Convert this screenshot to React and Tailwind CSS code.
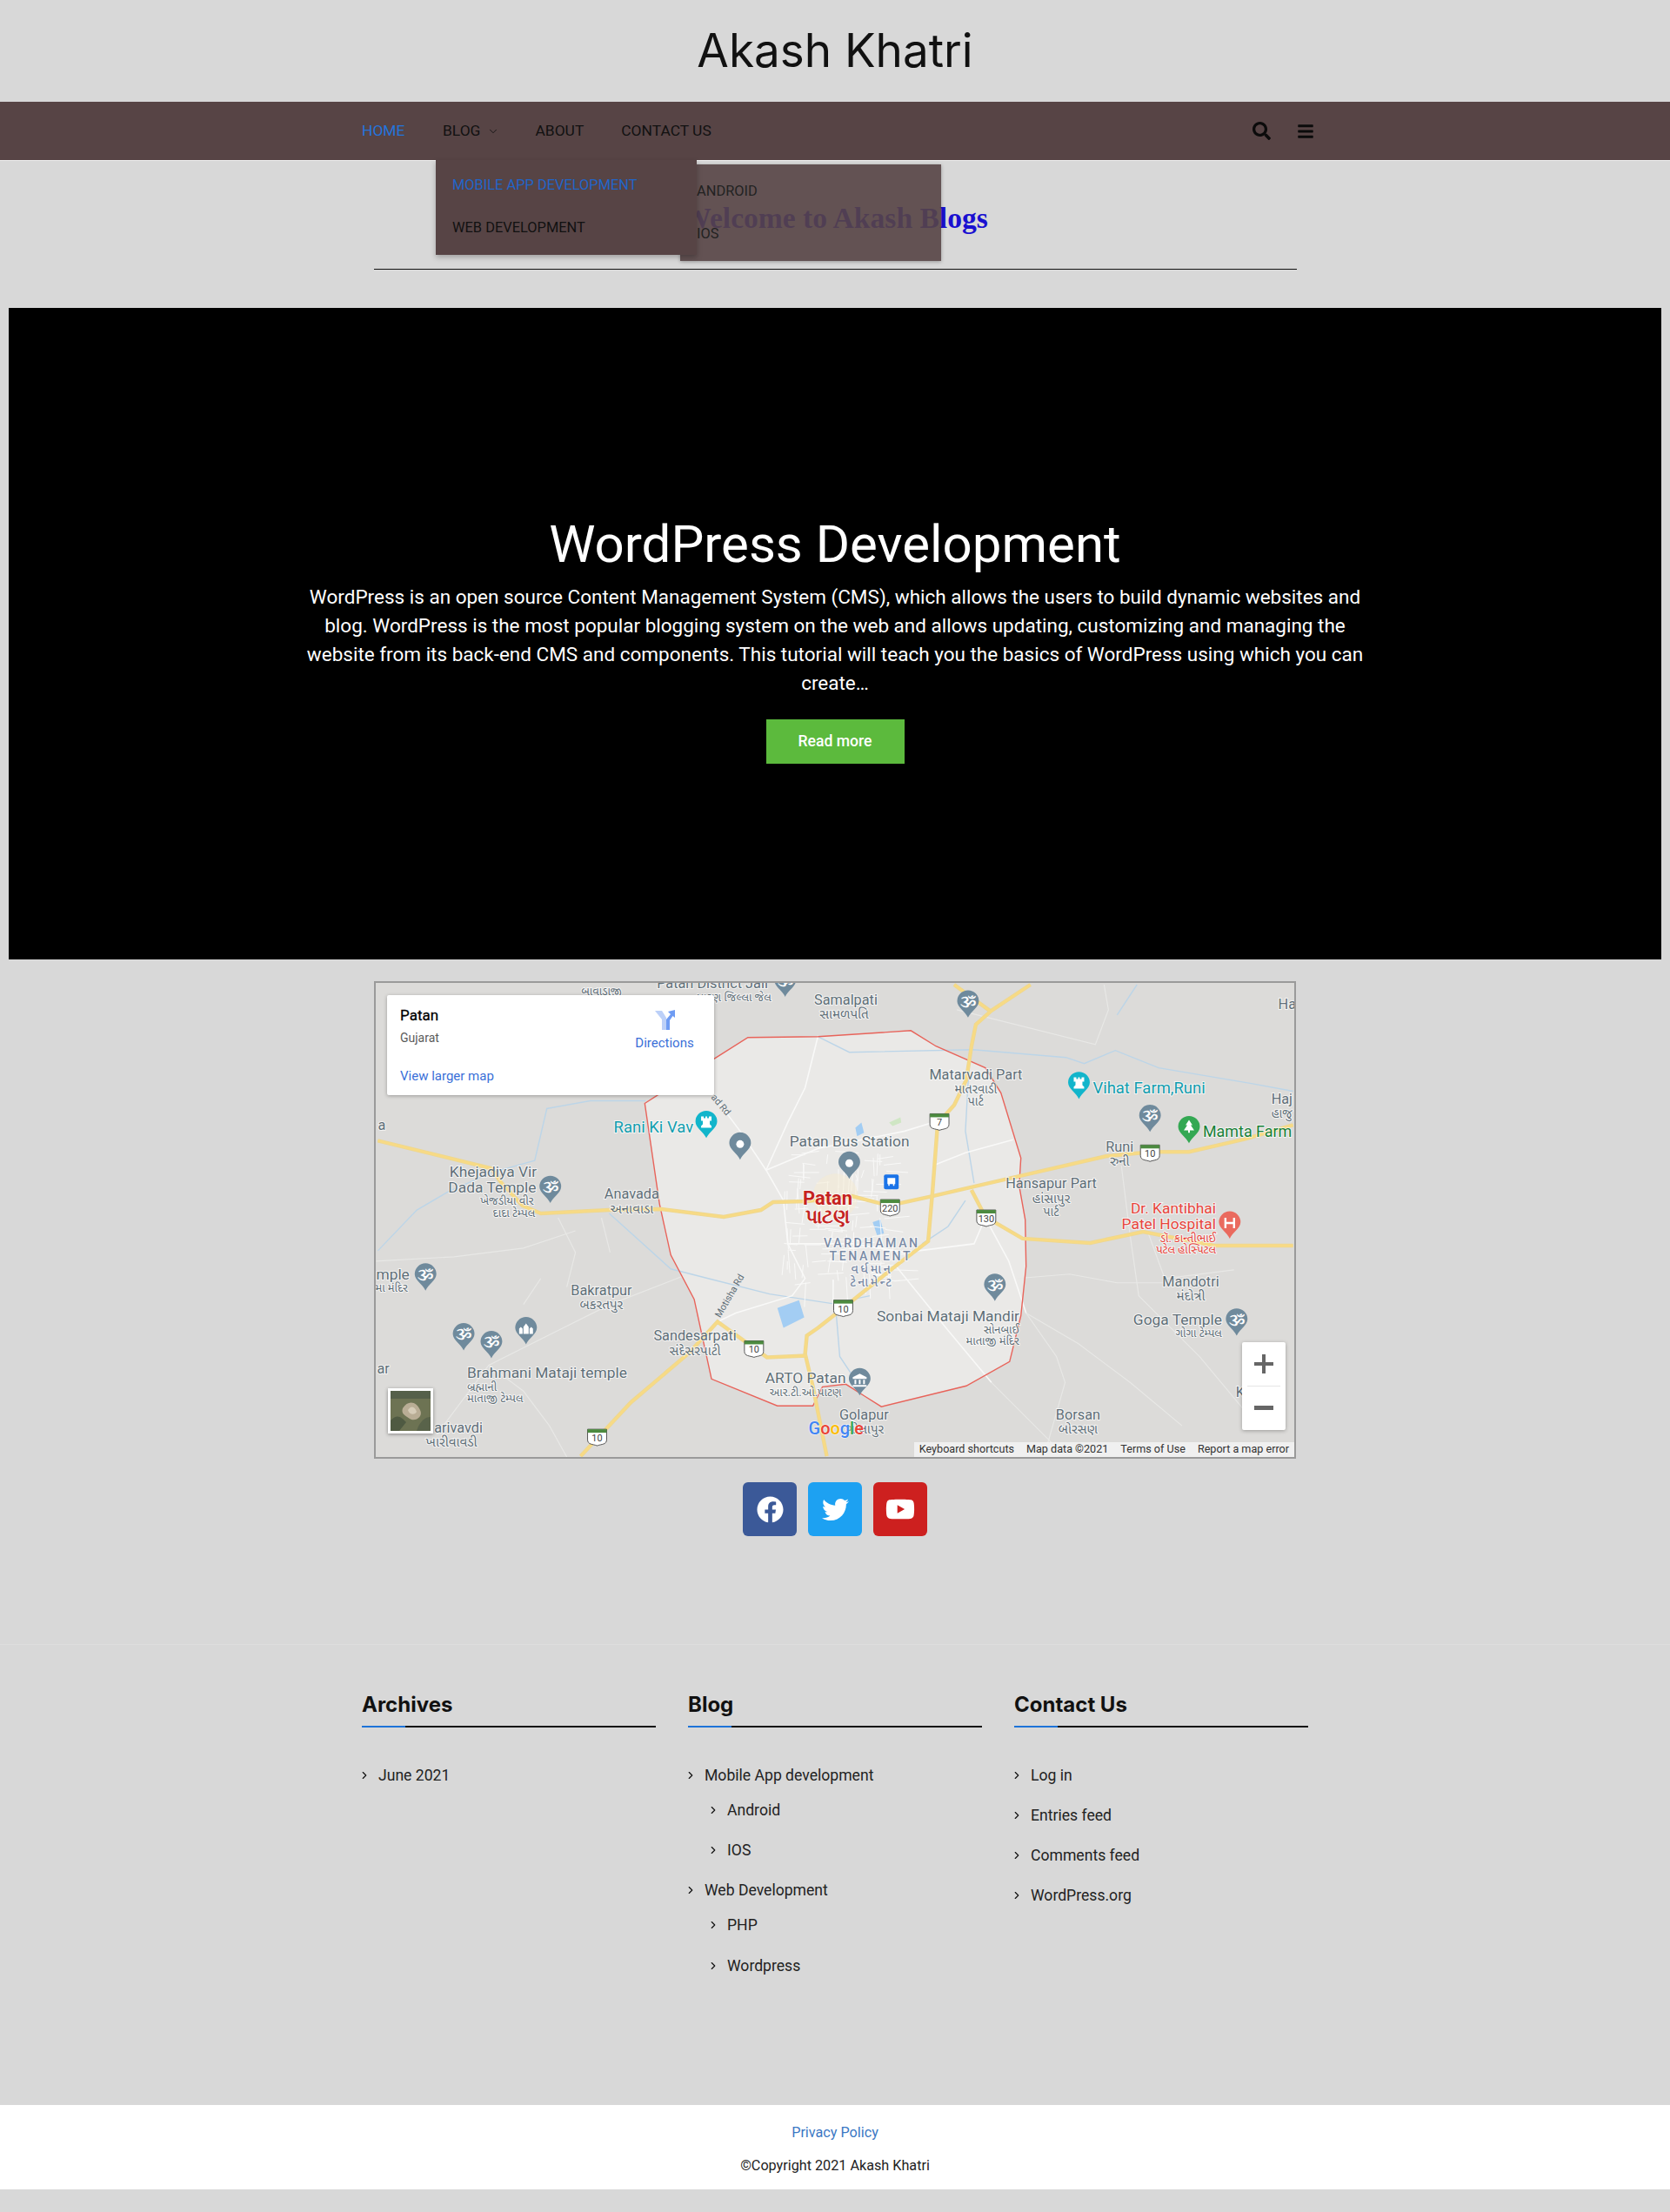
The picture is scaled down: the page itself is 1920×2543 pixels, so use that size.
import { ChevronDown, ChevronRight } from 'lucide-react';
import { FaBars, FaFacebook, FaSearch, FaTwitter, FaYoutube } from 'react-icons/fa';

const roadsMajor = [
  '432,1311 563,1343 574,1359 599,1386 620,1395 699,1391 759,1390 831,1399 874,1391 888,1382 927,1381 979,1375 1022,1386 1072,1375 1172,1352 1272,1329 1324,1324 1368,1324 1433,1309 1488,1293',
  '1185,1131 1140,1161 1122,1177 1117,1202 1111,1241 1097,1270 1078,1291 1072,1370 1067,1427 1029,1456 994,1484 969,1504 940,1527 927,1536 925,1557 934,1595 950,1675',
  '1097,1131 1138,1161',
  '1117,1368 1133,1399 1176,1424 1254,1429 1315,1416 1397,1432 1488,1432',
  '666,1675 724,1613 791,1556 824,1520 881,1561 927,1559',
];

const roadsTown = [
  '820,1260 850,1300 880,1345 900,1380 905,1430 925,1470 910,1490 845,1510 824,1520',
  '880,1345 940,1320 1040,1300 1072,1290',
  '940,1190 925,1250 905,1290 880,1345',
  '1072,1340 1110,1325 1165,1310',
  '1040,1440 1120,1430 1133,1400',
  '905,1430 980,1430 1040,1440',
  '1133,1400 1160,1450 1180,1510',
  '1030,1456 1090,1530 1140,1590',
];

const roadsOuter = [
  '1180,1510 1240,1545 1300,1590 1360,1640',
  '1140,1590 1210,1660',
  '1170,1470 1230,1465 1285,1475 1370,1475',
  '1205,1660 1225,1590 1215,1560 1180,1510',
  '430,1450 520,1445 600,1435 660,1415',
  '500,1650 560,1570 640,1530 700,1500 790,1465',
  '560,1570 600,1600 630,1640 650,1676',
  '1290,1340 1300,1420 1310,1490 1380,1560 1430,1620',
  '1320,1415 1340,1470 1420,1460',
  '1100,1160 1260,1200 1275,1160 1270,1131',
  '700,1440 690,1400',
  '640,1400 660,1440 650,1480',
  '600,1500 620,1470',
];

const rivers = [
  '432,1438 477,1391 513,1370 563,1348 613,1334 627,1274 677,1265 741,1265',
  '699,1395 770,1459 813,1470 884,1488 956,1499 1000,1490',
  '940,1191 976,1209 1119,1206 1226,1215 1247,1222 1283,1207 1333,1227 1440,1245 1488,1254',
  '1308,1131 1285,1166',
  '1110,1380 1090,1410 1060,1430',
  '1115,1210 1110,1300 1120,1360',
  '960,1500 965,1560 985,1590',
];

const pins = [
  { x: 631, y: 1365, c: '#6f8a9c', g: 'om' },
  { x: 487, y: 1466, c: '#6f8a9c', g: 'om' },
  { x: 531, y: 1535, c: '#6f8a9c', g: 'om' },
  { x: 563, y: 1544, c: '#6f8a9c', g: 'om' },
  { x: 603, y: 1528, c: '#6f8a9c', g: 'temple' },
  { x: 850, y: 1315, c: '#6f8a9c', g: 'dot' },
  { x: 976, y: 1337, c: '#6f8a9c', g: 'dot' },
  { x: 902, y: 1127, c: '#6f8a9c', g: 'om' },
  { x: 811, y: 1290, c: '#12b5cb', g: 'rook' },
  { x: 1113, y: 1151, c: '#6f8a9c', g: 'om' },
  { x: 1241, y: 1245, c: '#12b5cb', g: 'rook' },
  { x: 1323, y: 1283, c: '#6f8a9c', g: 'om' },
  { x: 1368, y: 1296, c: '#34a853', g: 'tree' },
  { x: 1415, y: 1406, c: '#ea6a5e', g: 'H' },
  { x: 1144, y: 1478, c: '#6f8a9c', g: 'om' },
  { x: 1423, y: 1518, c: '#6f8a9c', g: 'om' },
  { x: 988, y: 1587, c: '#6f8a9c', g: 'museum' },
];

const shields = [
  { x: 1080, y: 1289, t: '7' },
  { x: 1023, y: 1388, t: '220' },
  { x: 1134, y: 1400, t: '130' },
  { x: 1323, y: 1325, t: '10' },
  { x: 969, y: 1504, t: '10' },
  { x: 866, y: 1551, t: '10' },
  { x: 685, y: 1653, t: '10' },
];

// [text, x, baseline y, anchor, size, colour]
const gray = '#5f6f78';
const labels = [
  ['Samalpati', 972, 1154, 'middle', 15, gray],
  ['સામળપતિ', 970, 1170, 'middle', 14, gray],
  ['Khejadiya Vir', 565, 1353, 'middle', 16, gray],
  ['Dada Temple', 564, 1371, 'middle', 16, gray],
  ['ખેજડીયા વીર', 581, 1385, 'middle', 12, gray],
  ['દાદા ટેમ્પલ', 589, 1399, 'middle', 12, gray],
  ['Anavada', 725, 1378, 'middle', 15, gray],
  ['અનાવાડા', 725, 1395, 'middle', 14, gray],
  ['Rani Ki Vav', 796, 1302, 'end', 17, '#129eaf'],
  ['Patan Bus Station', 907, 1318, 'start', 16, gray],
  ['VARDHAMAN', 1002, 1434, 'middle', 13, '#7a8ba6'],
  ['TENAMENT', 1001, 1449, 'middle', 13, '#7a8ba6'],
  ['વર્ધમાન', 1002, 1464, 'middle', 13, '#7a8ba6'],
  ['ટેનામેન્ટ', 1002, 1479, 'middle', 13, '#7a8ba6'],
  ['Matarvadi Part', 1122, 1240, 'middle', 15, gray],
  ['માતરવાડી', 1122, 1256, 'middle', 13, gray],
  ['પાર્ટ', 1122, 1271, 'middle', 13, gray],
  ['Vihat Farm,Runi', 1257, 1256, 'start', 17, '#129eaf'],
  ['Mamta Farm', 1384, 1307, 'start', 16.500, '#188038'],
  ['Runi', 1288, 1324, 'middle', 15, gray],
  ['રુની', 1288, 1340, 'middle', 14, gray],
  ['Hansapur Part', 1209, 1366, 'middle', 15, gray],
  ['હાંસાપુર', 1209, 1383, 'middle', 14, gray],
  ['પાર્ટ', 1209, 1398, 'middle', 13, gray],
  ['Dr. Kantibhai', 1399, 1395, 'end', 16, '#e8453c'],
  ['Patel Hospital', 1399, 1413, 'end', 16, '#e8453c'],
  ['ડૉ. કાન્તીભાઈ', 1399, 1428, 'end', 12, '#e8453c'],
  ['પટેલ હોસ્પિટલ', 1399, 1441, 'end', 12, '#e8453c'],
  ['Mandotri', 1370, 1479, 'middle', 15, gray],
  ['મંદોત્રી', 1370, 1495, 'middle', 14, gray],
  ['Goga Temple', 1406, 1523, 'end', 16, gray],
  ['ગોગા ટેમ્પલ', 1406, 1537, 'end', 12, gray],
  ['Sonbai Mataji Mandir', 1090, 1519, 'middle', 16, gray],
  ['સોનબાઈ', 1172, 1533, 'end', 12, gray],
  ['માતાજી મંદિર', 1172, 1547, 'end', 12, gray],
  ['Borsan', 1240, 1633, 'middle', 15, gray],
  ['બોરસણ', 1240, 1649, 'middle', 14, gray],
  ['Golapur', 993, 1633, 'middle', 15, gray],
  ['ગોલાપુર', 1016, 1649, 'end', 14, gray],
  ['ARTO Patan', 879, 1591, 'start', 16, gray],
  ['આર.ટી.ઓ.પાટણ', 884, 1606, 'start', 12, gray],
  ['Sandesarpati', 798, 1542, 'middle', 15, gray],
  ['સંદેસરપાટી', 798, 1559, 'middle', 14, gray],
  ['Brahmani Mataji temple', 535, 1585, 'start', 16, gray],
  ['બ્રહ્માની', 535, 1600, 'start', 12, gray],
  ['માતાજી ટેમ્પલ', 535, 1613, 'start', 12, gray],
  ['Bakratpur', 690, 1489, 'middle', 15, gray],
  ['બકરતપુર', 690, 1505, 'middle', 14, gray],
  ['arivavdi', 497, 1648, 'start', 15, gray],
  ['ખારીવાવડી', 517, 1664, 'middle', 14, gray],
  ['mple', 430, 1471, 'start', 16, gray],
  ['મા મંદિર', 429, 1485, 'start', 12, gray],
  ['a', 432, 1299, 'start', 15, gray],
  ['ar', 431, 1580, 'start', 15, gray],
  ['Patan District Jail', 818, 1135, 'middle', 15, gray],
  ['પાટણ જિલ્લા જેલ', 886, 1150, 'end', 12, gray],
  ['બાવાડાજી', 690, 1143, 'middle', 12, gray],
  ['Ha', 1471, 1159, 'start', 15, gray],
  ['Haj', 1463, 1269, 'start', 15, gray],
  ['હાજુ', 1463, 1285, 'start', 13, gray],
  ['K', 1422, 1607, 'start', 15, gray],
];

function PinGlyph({ g }) {
  if (g === 'dot') return <circle cx="0" cy="0" r="4.5" fill="#fff" />;
  if (g === 'H') {
    return <path d="M-5,-6V6M5,-6V6M-5,0H5" stroke="#fff" strokeWidth="2.4" fill="none" />;
  }
  if (g === 'om') {
    return (
      <text x="0" y="6" textAnchor="middle" fontSize="17" fontWeight="700" fill="#fff" fontFamily="'Noto Sans', sans-serif">
        ૐ
      </text>
    );
  }
  if (g === 'rook') {
    return <path d="M-6,-7h3v2h2v-2h2v2h2v-2h3v5h-2v4l2,2v2h-12v-2l2,-2v-4h-2z" fill="#fff" />;
  }
  if (g === 'tree') return <path d="M0,-9l4,6h-2l4,6h-5v3h-2v-3h-5l4,-6h-2z" fill="#fff" />;
  if (g === 'temple') {
    return <path d="M-8,6v-6l2,-2l2,2v6zM-3,6v-8l3,-4l3,4v8zM4,6v-6l2,-2l2,2v6z" fill="#fff" />;
  }
  return <path d="M0,-7l8,4v2h-16v-2zM-6,0h2v5h-2zM-1,0h2v5h-2zM4,0h2v5h-2zM-8,6h16v2h-16z" fill="#fff" />;
}

function MapPin({ x, y, c, g }) {
  return (
    <g transform={`translate(${x} ${y})`}>
      <path d="M0,18C-3,11 -12.5,6 -12.5,-1A12.5,12.5 0 1 1 12.5,-1C12.5,6 3,11 0,18Z" fill={c} />
      <PinGlyph g={g} />
    </g>
  );
}

function Shield({ x, y, t }) {
  return (
    <g transform={`translate(${x} ${y})`}>
      <path d="M-11,-9H11V3C11,9 5,8 0,10C-5,8 -11,9 -11,3Z" fill="#fff" stroke="#555" strokeWidth="1" />
      <path d="M-11,-9H11V-5H-11Z" fill="#4c8a3f" />
      <text x="0" y="5" textAnchor="middle" fontSize="11" fill="#444" fontFamily="Roboto, sans-serif">
        {t}
      </text>
    </g>
  );
}

function MapDrawing() {
  // small irregular streets for the town centre
  let seed = 7;
  const rnd = () => {
    seed = (seed * 1103 + 12345) % 65536;
    return seed / 65536;
  };
  let town = '';
  for (let i = 0; i < 130; i++) {
    const x = 900 + rnd() * 130;
    const y = 1320 + rnd() * 160;
    const horizontal = rnd() > 0.5;
    const len = 8 + rnd() * 22;
    const skew = rnd() * 6 - 3;
    town += horizontal ? `M${x},${y}l${len},${skew}` : `M${x},${y}l${skew},${len}`;
  }
  const boundary =
    '740,1268 821,1216 859,1192 940,1191 1047,1184 1076,1202 1133,1227 1151,1256 1174,1331 1172,1363 1179,1402 1180,1456 1174,1513 1161,1566 1111,1594 1013,1618 994,1606 972,1592 945,1595 934,1617 893,1617 817,1586 797,1494 770,1443 757,1384';
  return (
    <svg viewBox="430 1129 1059 547" className="block w-full h-full">
      <rect x="430" y="1129" width="1059" height="547" fill="#dcdbd9" />
      <polygon points={boundary} fill="#eae9e7" />
      {roadsOuter.map((p) => (
        <polyline key={p} points={p} fill="none" stroke="#e8e8e6" strokeWidth="1.2" />
      ))}
      {rivers.map((p) => (
        <polyline key={p} points={p} fill="none" stroke="#bcd5e8" strokeWidth="1.4" />
      ))}
      <polygon points="893,1504 918,1495 924,1515 900,1527" fill="#a3cdf3" />
      <polygon points="983,1296 990,1290 993,1302 985,1306" fill="#a3cdf3" />
      <polygon points="1003,1405 1012,1402 1016,1418 1008,1420" fill="#a3cdf3" />
      <polygon points="1022,1290 1035,1284 1036,1290 1026,1294" fill="#cfe6c4" />
      {roadsTown.map((p) => (
        <polyline key={p} points={p} fill="none" stroke="#f9f9f8" strokeWidth="1.6" />
      ))}
      <path d={town} stroke="#f9f9f8" strokeWidth="1" fill="none" />
      <circle cx="960" cy="1375" r="26" fill="#f6ecd2" opacity="0.5" />
      <polygon points={boundary} fill="none" stroke="#e8635a" strokeWidth="1.4" />
      {roadsMajor.map((p) => (
        <g key={p}>
          <polyline points={p} fill="none" stroke="#ecd793" strokeWidth="4.5" />
          <polyline points={p} fill="none" stroke="#f7da85" strokeWidth="3" />
        </g>
      ))}
      {labels.map(([t, x, y, a, s, c]) => (
        <text
          key={`${t}${x}`}
          x={x}
          y={y}
          textAnchor={a}
          fontSize={s * 1.09}
          fill={c}
          stroke="#ffffff"
          strokeOpacity="0.7"
          strokeWidth="2"
          paintOrder="stroke"
          letterSpacing={c === '#7a8ba6' && s === 13 ? 2.6 : 0}
          fontWeight={c === '#7a8ba6' && s === 13 ? 500 : 400}
          fontFamily="Roboto, 'Noto Sans Gujarati', 'Noto Sans', sans-serif"
        >
          {t}
        </text>
      ))}
      <text x="841" y="1492" fontSize="11" fill={gray} transform="rotate(-60 841 1492)" textAnchor="middle" fontFamily="Roboto, sans-serif">
        Motisha Rd
      </text>
      <text x="825" y="1272" fontSize="11" fill={gray} transform="rotate(50 825 1272)" textAnchor="middle" fontFamily="Roboto, sans-serif">
        ad Rd
      </text>
      <text x="951" y="1385" textAnchor="middle" fontSize="22" fontWeight="700" fill="#c5221f" stroke="#fff" strokeOpacity="0.7" strokeWidth="2" paintOrder="stroke" fontFamily="Roboto, sans-serif">
        Patan
      </text>
      <text x="951" y="1406" textAnchor="middle" fontSize="22" fontWeight="700" fill="#c5221f" stroke="#fff" strokeOpacity="0.7" strokeWidth="2" paintOrder="stroke" fontFamily="Roboto, 'Noto Sans', sans-serif">
        પાટણ
      </text>
      {shields.map((s) => (
        <Shield key={`${s.x}${s.t}`} {...s} />
      ))}
      {pins.map((p) => (
        <MapPin key={`${p.x}${p.y}`} {...p} />
      ))}
      <rect x="1016" y="1350" width="17" height="17" rx="2" fill="#1a73e8" />
      <path d="M1020,1354h9v7h-1v2h-1.500v-2h-4v2h-1.500v-2h-1z" fill="#fff" />
      <text x="929" y="1650" fontSize="20" fontWeight="500" fontFamily="Roboto, sans-serif" stroke="#fff" strokeOpacity="0.6" strokeWidth="1.5" paintOrder="stroke">
        <tspan fill="#4285f4">G</tspan>
        <tspan fill="#ea4335">o</tspan>
        <tspan fill="#fbbc05">o</tspan>
        <tspan fill="#4285f4">g</tspan>
        <tspan fill="#34a853">l</tspan>
        <tspan fill="#ea4335">e</tspan>
      </text>
    </svg>
  );
}

function MapEmbed() {
  return (
    <div className="relative w-[1060px] h-[549px] border-2 border-[#9a9a9a] mx-auto overflow-hidden font-['Roboto',sans-serif]">
      <MapDrawing />
      <div className="absolute left-[13px] top-[14px] w-[376px] h-[115px] bg-white shadow-[0_1px_4px_rgba(0,0,0,0.3)] rounded-[2px] pl-[15px] pt-[11px] flex justify-between">
        <div>
          <p className="text-[17px] text-black leading-[24px] [-webkit-text-stroke:0.3px_black]">Patan</p>
          <p className="text-[14px] text-[#5b5b5b] mt-[4px] leading-[20px]">Gujarat</p>
          <p className="text-[15px] text-[#3a6fd8] mt-[24px] leading-[20px]">View larger map</p>
        </div>
        <div className="w-[90px] mr-[12px] flex flex-col items-center pt-[5px]">
          <svg viewBox="0 0 24 24" className="w-[24px] h-[24px]">
            <path d="M1,2L9,2L14,10L14,24L9,24L9,12Z" fill="#bcd0f8" />
            <path d="M14,24V12L19,6L16,3L24,1L24,10L21.500,8L18,13V24Z" fill="#6f9cf3" />
          </svg>
          <p className="text-[15px] text-[#3a6fd8] mt-[5px] leading-[20px]">Directions</p>
        </div>
      </div>
      <div className="absolute left-[14px] bottom-[27px] w-[52px] h-[52px] border-[3px] border-white shadow-[0_1px_4px_rgba(0,0,0,0.4)]">
        <svg viewBox="0 0 46 46" className="block w-full h-full">
          <rect width="46" height="46" fill="#6d7353" />
          <rect y="0" width="46" height="9" fill="#55604a" />
          <path d="M0,34C8,26 12,30 18,36L10,46H0Z" fill="#4f5a42" />
          <path d="M30,46C34,34 40,30 46,30V46Z" fill="#59634a" />
          <path d="M14,20C20,10 30,12 34,22C38,30 28,36 22,32C16,28 12,26 14,20Z" fill="#b9ad95" />
          <path d="M20,22C24,16 28,18 30,24C28,28 22,28 20,22Z" fill="#d6ccb8" />
        </svg>
      </div>
      <div className="absolute right-[10px] bottom-[31px] w-[50px] h-[101px] bg-white shadow-[0_1px_4px_rgba(0,0,0,0.3)] rounded-[2px] flex flex-col items-center">
        <div className="flex-1 flex items-center justify-center">
          <svg viewBox="0 0 24 24" className="w-[24px] h-[24px]">
            <path d="M10,1H14V10H23V14H14V23H10V14H1V10H10Z" fill="#666" />
          </svg>
        </div>
        <div className="w-[38px] h-px bg-[#e6e6e6]" />
        <div className="flex-1 flex items-center justify-center">
          <svg viewBox="0 0 24 24" className="w-[24px] h-[24px]">
            <path d="M1,9H23V14H1Z" fill="#666" />
          </svg>
        </div>
      </div>
      <div className="absolute right-0 bottom-0 h-[17px] flex items-center bg-[#f5f5f5]/80 text-[12.6px] text-[#333] px-[6px] gap-[14px] whitespace-nowrap">
        <span>Keyboard shortcuts</span>
        <span>Map data ©2021</span>
        <span>Terms of Use</span>
        <span>Report a map error</span>
      </div>
    </div>
  );
}

function FooterLink({ text, nested, rowClass }) {
  return (
    <li className={`flex items-center gap-[10px] h-[24px] ${nested ? 'ml-[26px]' : ''} ${rowClass}`}>
      <ChevronRight className="w-[14px] h-[14px] -ml-[4px] text-[#111]" strokeWidth={2} />
      <span className="-ml-[1px]">{text}</span>
    </li>
  );
}

function Widget({ title, children }) {
  return (
    <div className="w-[338px]">
      <h3 className="font-['Inter',sans-serif] font-bold text-[24px] leading-[30px] text-[#111]">{title}</h3>
      <div className="relative h-[2px] bg-[#111] mt-[9px]">
        <div className="absolute left-0 top-0 h-[2px] w-[50px] bg-[#1e73d8]" />
      </div>
      <ul className="mt-[43px] text-[17.6px] text-[#222]">{children}</ul>
    </div>
  );
}

export default function App() {
  return (
    <div className="bg-[#d8d8d8] min-h-[2543px] font-['Roboto',sans-serif]">
      <header className="h-[117px] flex items-center justify-center">
        <h1 className="font-['Inter',sans-serif] text-[53px] text-[#111]">Akash Khatri</h1>
      </header>

      <nav className="relative z-10 h-[68px] bg-[#574445] border-b border-[#eee]">
        <div className="h-full w-[1088px] mx-auto flex items-center text-[17.4px] text-[#111]">
          <a className="text-[#2474dc] w-[50px]">HOME</a>
          <div className="relative ml-[43px] flex items-center h-full">
            <a>BLOG</a>
            <ChevronDown className="ml-[8px] w-[14px] h-[14px]" strokeWidth={1.5} />
            <div className="absolute left-[-8px] top-[67px] w-[300px] h-[109px] bg-[#574445] shadow-[0_3px_6px_rgba(0,0,0,0.25)] z-20 pl-[19px] text-[16.4px]">
              <p className="text-[#2265c8] h-[49px] pt-[17px] leading-[24px]">MOBILE APP DEVELOPMENT</p>
              <p className="pt-[17px] leading-[24px]">WEB DEVELOPMENT</p>
            </div>
            <div className="absolute left-[273px] top-[72px] w-[300px] h-[111px] bg-[#574445]/90 shadow-[0_1px_4px_rgba(0,0,0,0.3)] z-10 pl-[19px] text-[16.4px] text-[#222]">
              <p className="h-[49px] pt-[19px] leading-[24px]">ANDROID</p>
              <p className="pt-[19px] leading-[24px]">IOS</p>
            </div>
          </div>
          <a className="ml-[41px]">ABOUT</a>
          <a className="ml-[43px]">CONTACT US</a>
          <div className="ml-auto flex items-center gap-[30px] text-[#0b0b0b] -mr-[7px]">
            <FaSearch className="w-[21px] h-[21px]" />
            <FaBars className="w-[20px] h-[20px]" />
          </div>
        </div>
      </nav>

      <section className="h-[125px] w-[1061px] mx-auto border-b border-[#111] flex justify-center">
        <h2 className="font-['Liberation_Serif',serif] font-bold text-[#1a10d0] text-[33.6px] leading-[40px] mt-[46px]">
          Welcome to Akash Blogs
        </h2>
      </section>

      <section className="mt-[44px] mx-[10px] h-[749px] bg-black text-white flex flex-col items-center pt-[236px]">
        <h2 className="text-[60px] leading-[72px]">WordPress Development</h2>
        <p className="mt-[8px] w-[1230px] text-center text-[22.5px] leading-[33px]">
          WordPress is an open source Content Management System (CMS), which allows the users to build dynamic websites and blog. WordPress is the most popular blogging system on the web and allows updating, customizing and managing the website from its back-end CMS and components. This tutorial will teach you the basics of WordPress using which you can create…
        </p>
        <a className="mt-[25px] w-[159px] h-[51px] bg-[#5cba3d] flex items-center justify-center text-[17.6px] font-medium">
          Read more
        </a>
      </section>

      <section className="mt-[25px]">
        <MapEmbed />
      </section>

      <div className="mt-[27px] flex justify-center gap-[13px] text-white">
        <a className="w-[62px] h-[62px] rounded-[6px] bg-[#3b5998] flex items-center justify-center">
          <FaFacebook className="w-[31px] h-[31px]" />
        </a>
        <a className="w-[62px] h-[62px] rounded-[6px] bg-[#1da1f2] flex items-center justify-center">
          <FaTwitter className="w-[31px] h-[31px]" />
        </a>
        <a className="w-[62px] h-[62px] rounded-[6px] bg-[#cd201f] flex items-center justify-center">
          <FaYoutube className="w-[34px] h-[34px]" />
        </a>
      </div>

      <footer className="mt-[124px] border-t border-[#dedede]">
        <div className="h-[529px] w-[1088px] mx-auto flex gap-[37px] pt-[54px]">
          <Widget title="Archives">
            <FooterLink text="June 2021" />
          </Widget>
          <Widget title="Blog">
            <FooterLink text="Mobile App development" />
            <FooterLink text="Android" nested rowClass="mt-[16px]" />
            <FooterLink text="IOS" nested rowClass="mt-[22px]" />
            <FooterLink text="Web Development" rowClass="mt-[22px]" />
            <FooterLink text="PHP" nested rowClass="mt-[16px]" />
            <FooterLink text="Wordpress" nested rowClass="mt-[23px]" />
          </Widget>
          <Widget title="Contact Us">
            <FooterLink text="Log in" />
            <FooterLink text="Entries feed" rowClass="mt-[22px]" />
            <FooterLink text="Comments feed" rowClass="mt-[22px]" />
            <FooterLink text="WordPress.org" rowClass="mt-[22px]" />
          </Widget>
        </div>
        <div className="h-[97px] bg-white flex flex-col items-center pt-[22px] text-[16.2px]">
          <a className="text-[#3b78c4] leading-[20px]">Privacy Policy</a>
          <p className="text-[#222] leading-[20px] mt-[18px]">©Copyright 2021 Akash Khatri</p>
        </div>
      </footer>
    </div>
  );
}
